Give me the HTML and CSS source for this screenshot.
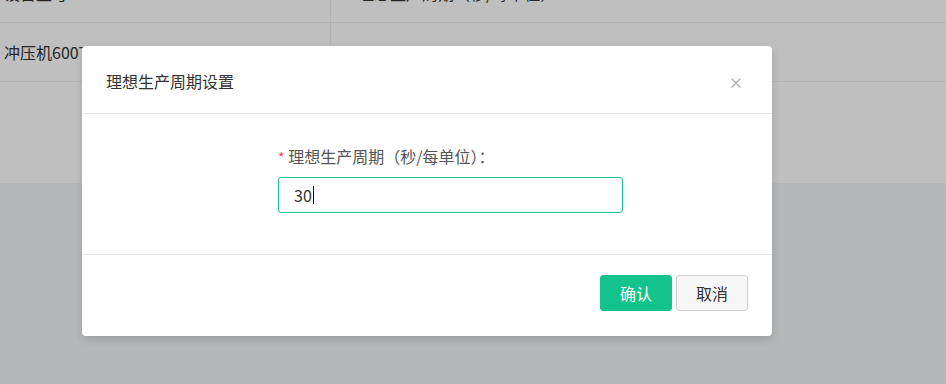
FILE: index.html
```html
<!DOCTYPE html>
<html lang="zh-CN">

<head>
    <meta charset="UTF-8">
    <meta name="viewport" content="width=device-width, initial-scale=1.0">
    <title>理想生产周期设置</title>
    <link rel="stylesheet" href="styles.css">
</head>

<body>
    <div class="page">
        <div class="table">
            <div class="row">
                <div class="cell first">设备型号</div>
                <div class="cell">理想生产周期（秒/每单位）</div>
            </div>
            <div class="row">
                <div class="cell first">冲压机600T</div>
                <div class="cell"></div>
            </div>
        </div>
    </div>

    <div class="modal">
        <div class="modal-header">
            <span class="modal-title">理想生产周期设置</span>
            <span class="modal-close">
                <svg width="10" height="10" viewBox="0 0 10 10">
                    <path d="M0.5 0.5 L9.5 9.5 M9.5 0.5 L0.5 9.5" stroke="#a8a8a8" stroke-width="1.1" fill="none" />
                </svg>
            </span>
        </div>
        <div class="modal-body">
            <div class="form-label"><span class="required">*</span> 理想生产周期（秒/每单位）：</div>
            <div class="form-input">30<span class="caret"></span></div>
        </div>
        <div class="modal-footer">
            <button class="btn primary">确认</button>
            <button class="btn">取消</button>
        </div>
    </div>
</body>

</html>
```

FILE: styles.css
```css
body {
    margin: 0;
    height: 384px;
    overflow: hidden;
    background-color: #b6b7b9;
    font-family: "Noto Sans CJK SC", sans-serif;
    color: #262626;
}

.page {
    height: 183px;
    background-color: #bfbfbf;
    overflow: hidden;
}

.table {
    margin-top: -36px;
}

.row {
    display: flex;
    height: 58px;
    border-bottom: 1px solid #b3b3b3;
}

.cell {
    flex: 1;
    display: flex;
    align-items: center;
    padding-left: 27px;
    font-size: 16px;
}

.cell.first {
    flex: 0 0 326px;
    padding-left: 4px;
    border-right: 1px solid #b3b3b3;
}

.modal {
    position: absolute;
    left: 82px;
    top: 46px;
    width: 690px;
    background-color: white;
    border-radius: 4px;
    box-shadow: 0 3px 8px rgba(0, 0, 0, 0.15);
}

.modal-header {
    display: flex;
    align-items: center;
    justify-content: space-between;
    height: 67px;
    padding: 0 31px 0 24px;
    border-bottom: 1px solid #e8e8e8;
}

.modal-title {
    font-size: 16px;
    color: #333;
    line-height: 22px;
    padding-top: 2px;
}

.modal-close {
    display: flex;
    margin-top: 6px;
}

.modal-body {
    padding: 31px 0 41px 196px;
    border-bottom: 1px solid #e8e8e8;
}

.form-label {
    font-size: 16px;
    line-height: 22px;
    color: #555;
    margin-bottom: 9px;
}

.required {
    color: #f04864;
    font-size: 14px;
}

.form-input {
    box-sizing: border-box;
    width: 345px;
    height: 36px;
    border: 1px solid #1ec28b;
    border-radius: 3px;
    padding: 0 15px;
    font-size: 16px;
    line-height: 34px;
    color: #333;
    display: flex;
    align-items: center;
}

.caret {
    display: inline-block;
    width: 1px;
    height: 18px;
    background-color: #111;
    margin-left: 1px;
}

.modal-footer {
    display: flex;
    justify-content: flex-end;
    gap: 4px;
    padding: 20px 24px 25px;
}

.btn {
    box-sizing: border-box;
    width: 72px;
    height: 36px;
    border: 1px solid #cfd2d6;
    border-radius: 3px;
    background-color: #f7f7f7;
    color: #333;
    font-family: "Noto Sans CJK SC", sans-serif;
    font-size: 16px;
    cursor: pointer;
}

.btn.primary {
    background-color: #13c38b;
    border-color: #13c38b;
    color: white;
}
```
